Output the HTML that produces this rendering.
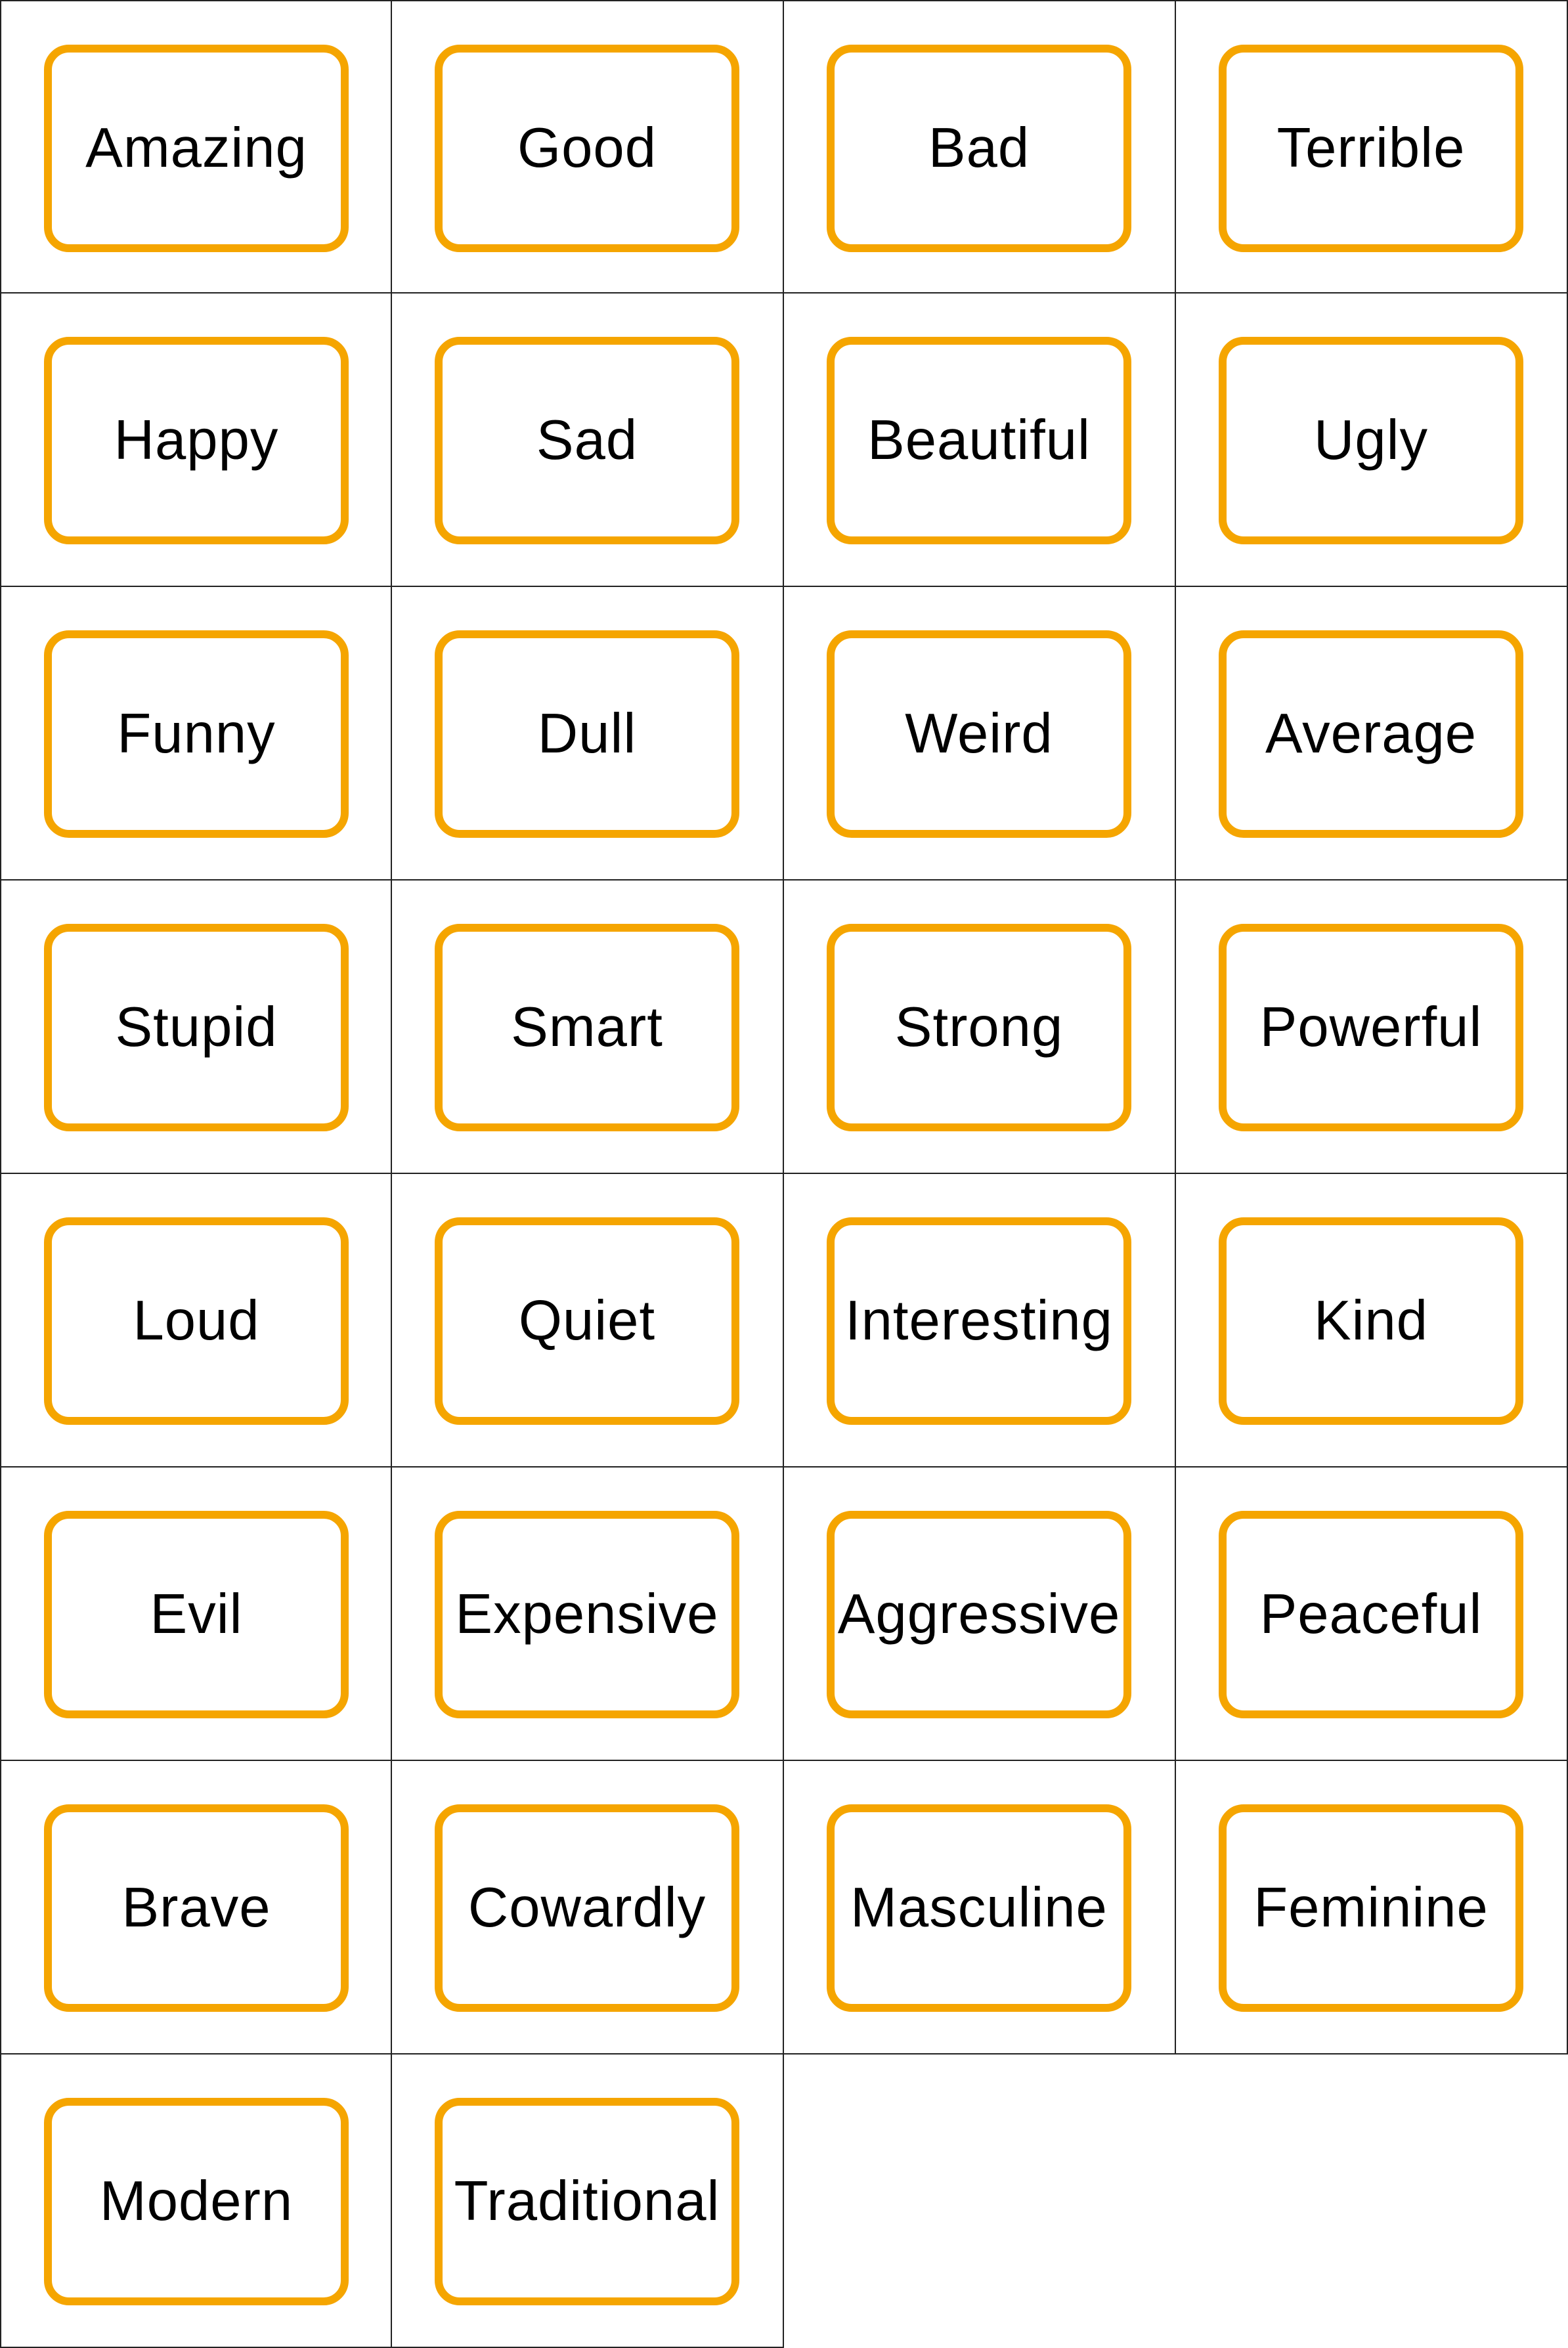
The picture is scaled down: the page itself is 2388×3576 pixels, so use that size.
<!DOCTYPE html>
<html><head><meta charset="utf-8"><style>
html,body{margin:0;padding:0;background:#fff;}
body{width:2388px;height:3576px;position:relative;overflow:hidden;font-family:"Liberation Sans",sans-serif;}
.c{position:absolute;width:597px;height:447px;box-sizing:border-box;border-right:2px solid #222;border-bottom:2px solid #222;}
.c.l{border-left:2px solid #222;}
.c.t{border-top:2px solid #222;}
.k{position:absolute;left:65px;top:66px;width:464px;height:316px;box-sizing:border-box;border:12px solid #F5A500;border-radius:38px;display:flex;align-items:center;justify-content:center;font-size:85px;color:#000;white-space:nowrap;letter-spacing:1px;}
</style></head><body>
<div class="c l t" style="left:0;top:0"><div class="k">Amazing</div></div>
<div class="c t" style="left:597px;top:0"><div class="k">Good</div></div>
<div class="c t" style="left:1194px;top:0"><div class="k">Bad</div></div>
<div class="c t" style="left:1791px;top:0"><div class="k">Terrible</div></div>
<div class="c l" style="left:0;top:447px"><div class="k">Happy</div></div>
<div class="c" style="left:597px;top:447px"><div class="k">Sad</div></div>
<div class="c" style="left:1194px;top:447px"><div class="k">Beautiful</div></div>
<div class="c" style="left:1791px;top:447px"><div class="k">Ugly</div></div>
<div class="c l" style="left:0;top:894px"><div class="k">Funny</div></div>
<div class="c" style="left:597px;top:894px"><div class="k">Dull</div></div>
<div class="c" style="left:1194px;top:894px"><div class="k">Weird</div></div>
<div class="c" style="left:1791px;top:894px"><div class="k">Average</div></div>
<div class="c l" style="left:0;top:1341px"><div class="k">Stupid</div></div>
<div class="c" style="left:597px;top:1341px"><div class="k">Smart</div></div>
<div class="c" style="left:1194px;top:1341px"><div class="k">Strong</div></div>
<div class="c" style="left:1791px;top:1341px"><div class="k">Powerful</div></div>
<div class="c l" style="left:0;top:1788px"><div class="k">Loud</div></div>
<div class="c" style="left:597px;top:1788px"><div class="k">Quiet</div></div>
<div class="c" style="left:1194px;top:1788px"><div class="k">Interesting</div></div>
<div class="c" style="left:1791px;top:1788px"><div class="k">Kind</div></div>
<div class="c l" style="left:0;top:2235px"><div class="k">Evil</div></div>
<div class="c" style="left:597px;top:2235px"><div class="k">Expensive</div></div>
<div class="c" style="left:1194px;top:2235px"><div class="k">Aggressive</div></div>
<div class="c" style="left:1791px;top:2235px"><div class="k">Peaceful</div></div>
<div class="c l" style="left:0;top:2682px"><div class="k">Brave</div></div>
<div class="c" style="left:597px;top:2682px"><div class="k">Cowardly</div></div>
<div class="c" style="left:1194px;top:2682px"><div class="k">Masculine</div></div>
<div class="c" style="left:1791px;top:2682px"><div class="k">Feminine</div></div>
<div class="c l" style="left:0;top:3129px"><div class="k">Modern</div></div>
<div class="c" style="left:597px;top:3129px"><div class="k">Traditional</div></div>
</body></html>
